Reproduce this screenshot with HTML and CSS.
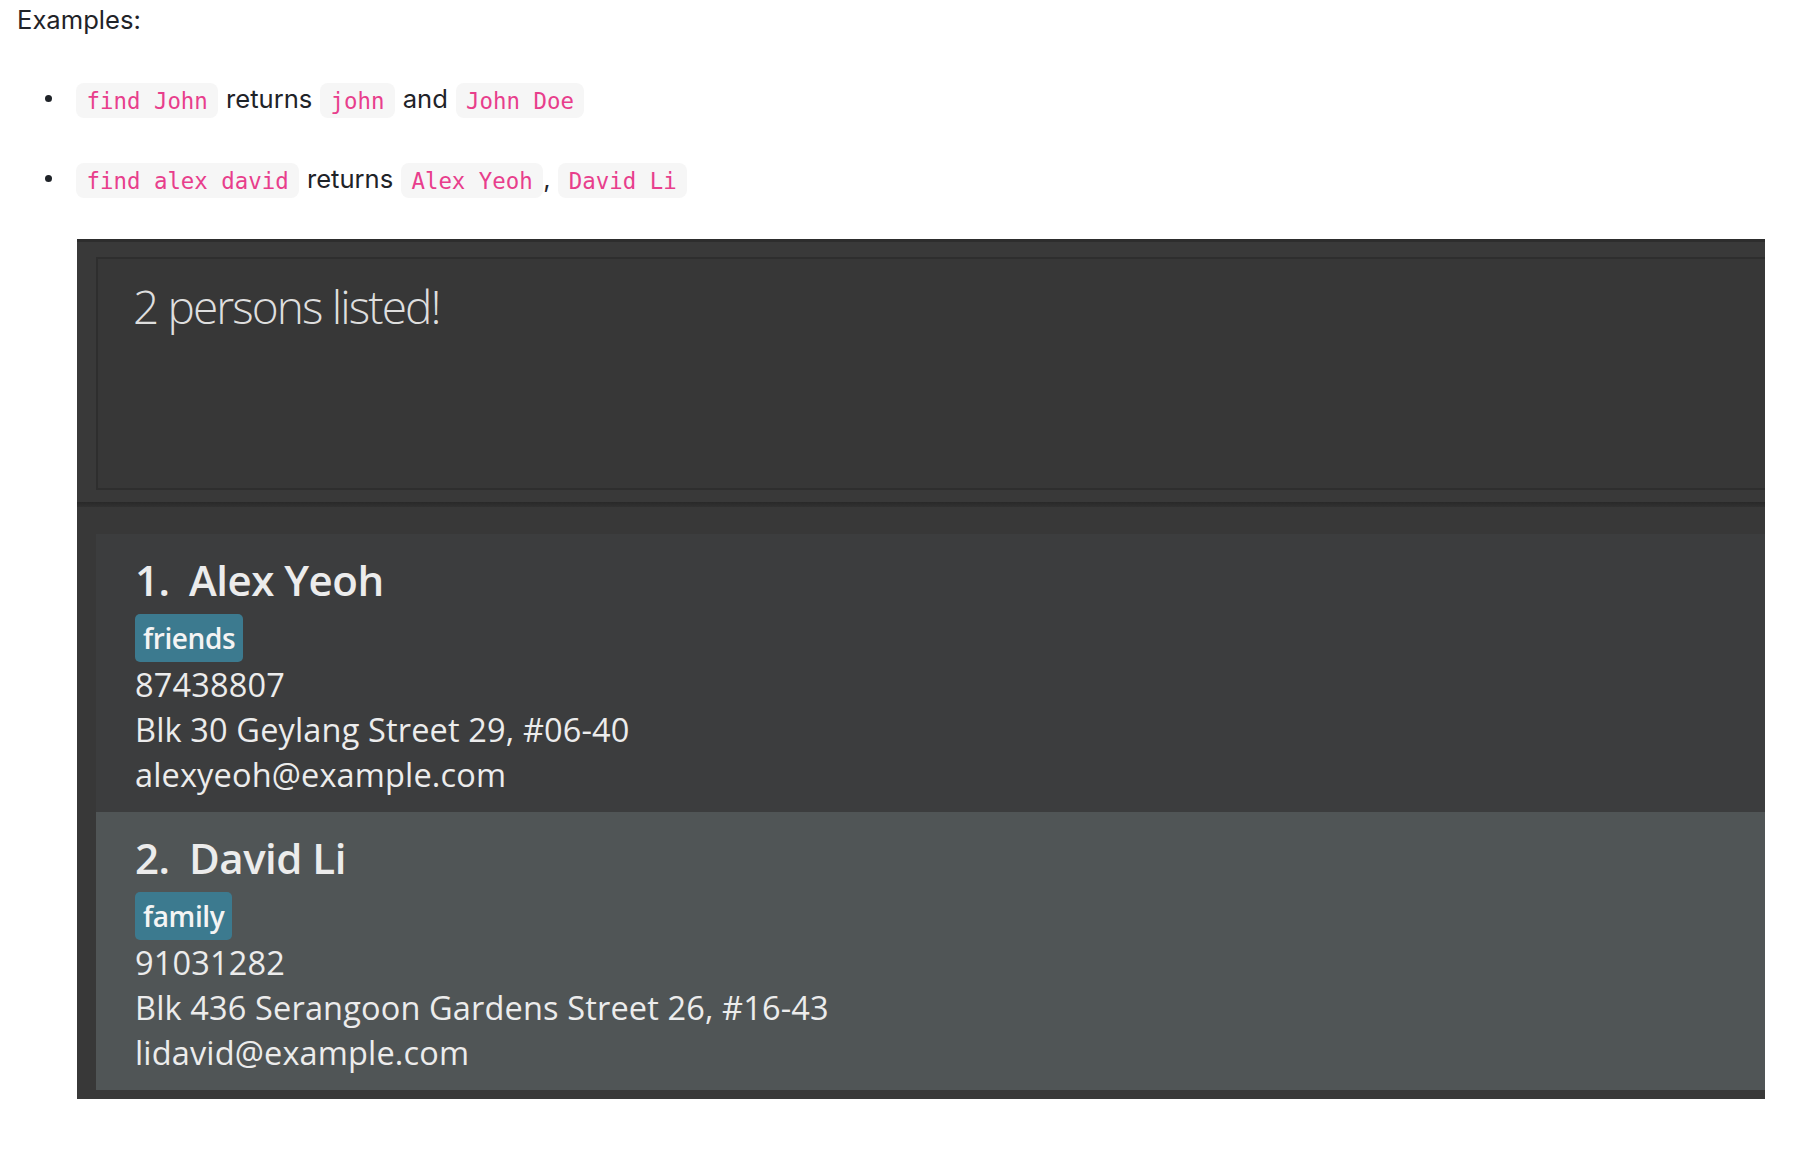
FILE: index.html
```html
<!DOCTYPE html>
<html lang="en">
<head>
<meta charset="utf-8">
<title>Examples</title>
<link rel="stylesheet" href="styles.css">
</head>
<body>
<div class="doc">
  <p class="lead">Examples:</p>
  <ul class="examples">
    <li><span class="li-text"><code>find John</code> returns <code>john</code> and <code>John Doe</code></span></li>
    <li><span class="li-text"><code>find alex david</code> returns <code>Alex Yeoh</code>, <code>David Li</code></span></li>
  </ul>
  <div class="panel">
    <div class="panel-head">
      <div class="result-box">2 persons listed!</div>
    </div>
    <div class="sep"></div>
    <div class="list">
      <div class="card even">
        <div class="name"><span class="idx">1.</span>Alex Yeoh</div>
        <div class="tags"><span class="tag">friends</span></div>
        <div class="detail">87438807</div>
        <div class="detail">Blk 30 Geylang Street 29, #06-40</div>
        <div class="detail">alexyeoh@example.com</div>
      </div>
      <div class="card odd">
        <div class="name"><span class="idx">2.</span>David Li</div>
        <div class="tags"><span class="tag">family</span></div>
        <div class="detail">91031282</div>
        <div class="detail">Blk 436 Serangoon Gardens Street 26, #16-43</div>
        <div class="detail">lidavid@example.com</div>
      </div>
    </div>
  </div>
</div>
</body>
</html>
```
FILE: styles.css
```css
html, body {
  margin: 0;
  padding: 0;
  background: #ffffff;
}

.doc {
  font-family: "Inter", "Liberation Sans", sans-serif;
  font-size: 25.6px;
  line-height: 41px;
  color: #1f2328;
}

.lead {
  margin: -1px 0 0 0;
  padding-left: 17px;
}

.examples {
  list-style: none;
  margin: 38px 0 0 0;
  padding: 0;
}

.examples li {
  display: flex;
  align-items: center;
  height: 41px;
  margin: 0 0 39px 0;
}

.examples li:last-child {
  margin-bottom: 40px;
}

.examples li::before {
  content: "";
  width: 7px;
  height: 7px;
  border-radius: 50%;
  background: #1f2328;
  margin: 0 24px 0 45px;
  flex: none;
}

.li-text {
  line-height: 41px;
  white-space: nowrap;
  word-spacing: 0.5px;
}

.examples code {
  font-family: "DejaVu Sans Mono", "Liberation Mono", monospace;
  font-size: 22.4px;
  line-height: 1;
  color: #e83e8c;
  background: #f6f6f6;
  border-radius: 8px;
  padding: 4.5px 10.5px;
  word-spacing: 0;
}

.panel {
  margin-left: 77px;
  width: 1688px;
  background: #393939;
  border-top: 3px solid #2d2d2d;
  padding-bottom: 9px;
  font-family: "Open Sans", "Noto Sans", sans-serif;
}

.panel-head {
  padding: 15px 0 12px 19px;
}

.result-box {
  box-sizing: border-box;
  height: 233px;
  border: 2px solid #2e2e2e;
  border-right: none;
  background: #373737;
  padding: 16px 0 0 35px;
  font-weight: 300;
  font-size: 46px;
  letter-spacing: -1.9px;
  line-height: normal;
  color: #dedede;
}

.sep {
  height: 5px;
  background: linear-gradient(#292929, #313131);
}

.list {
  background: #383838;
  padding: 27px 0 0 19px;
}

.card {
  height: 278px;
  box-sizing: border-box;
  padding: 21px 0 0 39px;
  color: #ececec;
}

.card.even {
  background: #3c3d3e;
}

.card.odd {
  background: #505556;
}

.name {
  font-weight: 600;
  font-size: 42px;
  line-height: 50px;
  letter-spacing: -0.5px;
  white-space: nowrap;
}

.idx {
  display: inline-block;
  width: 54px;
}

.tags {
  margin-top: 9px;
  height: 48px;
  display: flex;
}

.tag {
  display: inline-block;
  height: 48px;
  line-height: 48px;
  padding: 0 8px;
  border-radius: 5px;
  background: #3c7a8f;
  color: #f4f4f4;
  font-weight: 600;
  font-size: 28px;
  letter-spacing: -0.4px;
}

.detail {
  font-size: 32.5px;
  line-height: 45px;
  letter-spacing: 0.15px;
  white-space: nowrap;
}
```
